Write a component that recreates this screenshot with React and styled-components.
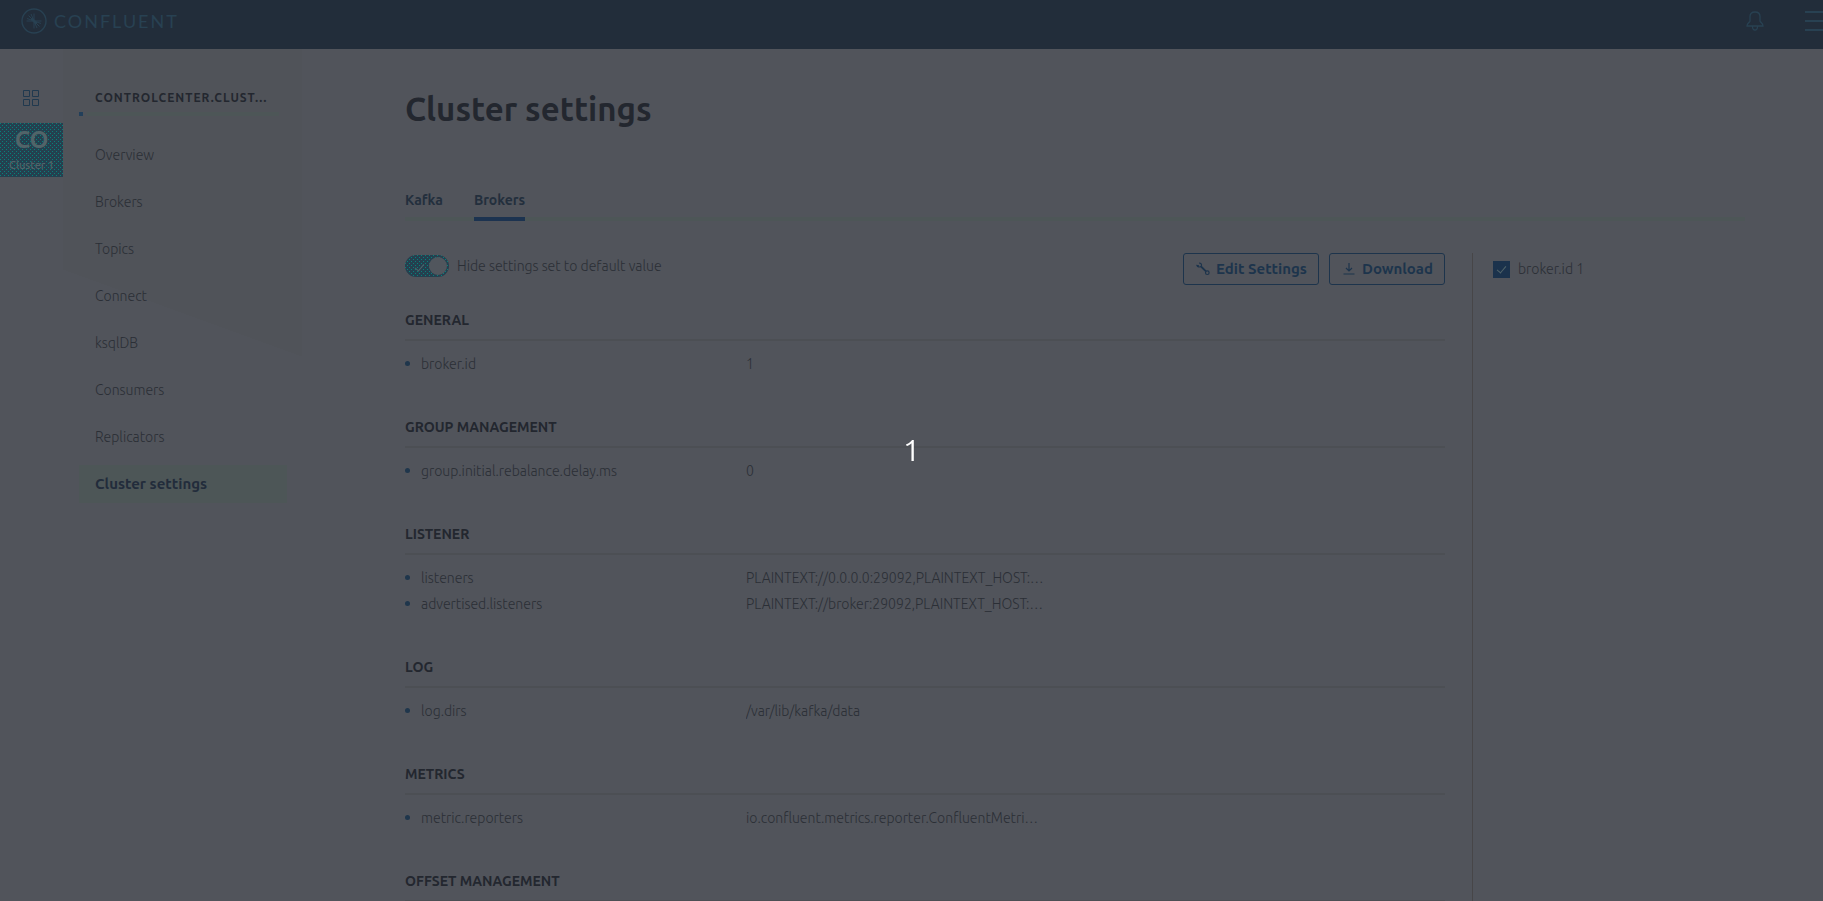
import React from "react";
import styled, { createGlobalStyle, css } from "styled-components";

const ink = "#23272f";
const soft = "#2b2f36";
const blue = "#1d344c";
const mint = "#4d5657";

const speckled = css`
  background:
    conic-gradient(from 270deg at 1px 1px, #08807a 90deg, transparent 0) 2px 2px / 4px 4px,
    conic-gradient(from 270deg at 1px 1px, #08807a 90deg, transparent 0) 4px 4px / 4px 4px,
    #24404f;
`;

const tick = css`
  content: "";
  width: 4px;
  height: 8px;
  border: solid #51646a;
  border-width: 0 1px 1px 0;
  transform: rotate(40deg);
`;

const GlobalStyle = createGlobalStyle`
  * { box-sizing: border-box; }
  body {
    margin: 0;
    background: #51545b;
    color: ${soft};
    font: 300 14px/26px Ubuntu, "Noto Sans", sans-serif;
  }
  h1, h2, ul, dl, dd, p { margin: 0; padding: 0; }
  ul { list-style: none; }
  a { color: inherit; text-decoration: none; }
  button { font: inherit; cursor: pointer; }
`;

const Page = styled.div`
  height: 100vh;
  overflow: hidden;
  display: flex;
  flex-direction: column;
`;

const TopBar = styled.header`
  flex: none;
  height: 49px;
  padding: 0 0 7px 21px;
  background: #222d3a;
  color: #284152;
  display: flex;
  align-items: center;
  justify-content: space-between;
`;

const Brand = styled.a`
  display: flex;
  align-items: center;
  gap: 7px;
  font: 400 18px/24px Lato, sans-serif;
  letter-spacing: 2px;
`;

const TopActions = styled.div`
  display: flex;
  align-items: center;
  gap: 41px;
`;

const IconButton = styled.button`
  display: flex;
  padding: 0;
  border: 0;
  background: none;
  color: inherit;
`;

const Body = styled.div`
  flex: 1;
  min-height: 0;
  display: flex;
`;

const Rail = styled.nav`
  flex: none;
  width: 63px;
  padding-top: 40px;
  display: flex;
  flex-direction: column;
  align-items: center;
  gap: 16px;
`;

const RailLink = styled.a`
  display: flex;
  color: #20394f;
`;

const ClusterTile = styled.a`
  width: 100%;
  height: 54px;
  padding-top: 4px;
  ${speckled}
  color: #516469;
  text-align: center;
`;

const TileCode = styled.strong`
  display: block;
  font-size: 24px;
  line-height: 26px;
  font-weight: 700;
`;

const TileName = styled.span`
  display: block;
  font-size: 11px;
  line-height: 24px;
  font-weight: 500;
`;

const Side = styled.nav`
  flex: none;
  width: 239px;
  padding: 36px 15px 0 16px;
  background: linear-gradient(200deg, #505359 0 289px, transparent 289px) no-repeat;
`;

const SideTitle = styled.h2`
  padding: 0 16px;
  color: ${ink};
  font-size: 12px;
  line-height: 26px;
  font-weight: 700;
  letter-spacing: 1px;
  white-space: nowrap;
`;

const Progress = styled.div`
  display: flex;
  gap: 4px;
  width: 200px;
  margin: 1px 0 20px;
  &::before { content: ""; width: 4px; height: 4px; background: #223f5a; }
  &::after { content: ""; flex: 1; height: 4px; background: ${mint}; }
`;

const SideList = styled.ul`
  display: flex;
  flex-direction: column;
  gap: 9px;
`;

const SideLink = styled.a`
  display: block;
  padding: 0 16px;
  line-height: 38px;
  font-size: ${(p) => (p.$active ? 15 : 14)}px;
  font-weight: ${(p) => (p.$active ? 700 : 300)};
  color: ${(p) => (p.$active ? "#222c3b" : soft)};
  background: ${(p) => (p.$active ? mint : "none")};
`;

const Main = styled.main`
  flex: 1;
  min-width: 0;
  padding: 39px 78px 0 103px;
  display: flex;
  flex-direction: column;
`;

const Title = styled.h1`
  color: ${ink};
  font-size: 33px;
  line-height: 42px;
  font-weight: 700;
`;

const Tabs = styled.div`
  margin-top: 57px;
  display: flex;
  gap: 31px;
  box-shadow: inset 0 -4px ${mint};
`;

const Tab = styled.button`
  padding: 0 0 4px;
  border: 0;
  border-bottom: 4px solid ${(p) => (p.$active ? "#1c3350" : "transparent")};
  background: none;
  color: #232f3d;
  font-weight: 600;
  line-height: 26px;
`;

const Columns = styled.div`
  flex: 1;
  min-height: 0;
  margin-top: 32px;
  display: grid;
  grid-template-columns: minmax(0, 1fr) 273px;
  gap: 27px;
`;

const BrokerPane = styled.aside`
  padding: 3px 20px;
  border-left: 1px solid #474648;
`;

const Toolbar = styled.div`
  display: flex;
  justify-content: space-between;
  align-items: flex-start;
  height: 54px;
`;

const Actions = styled.div`
  display: flex;
  gap: 10px;
`;

const Button = styled.button`
  display: flex;
  align-items: center;
  gap: 6px;
  height: 32px;
  padding: 0 11px 0 12px;
  border: 1px solid ${blue};
  border-radius: 3px;
  background: none;
  color: ${blue};
  font-size: 15px;
  font-weight: 700;
`;

const Choice = styled.label`
  display: flex;
  align-items: center;
  gap: 8px;
`;

const Switch = styled.input`
  appearance: none;
  margin: 0;
  width: 44px;
  height: 22px;
  padding: 0 2px 0 12px;
  border-radius: 11px;
  ${speckled}
  display: flex;
  align-items: center;
  justify-content: space-between;
  &::before { ${tick} }
  &::after {
    content: "";
    width: 18px;
    height: 18px;
    border-radius: 50%;
    background: #51565d;
  }
`;

const Check = styled.input`
  appearance: none;
  margin: 0;
  width: 17px;
  height: 17px;
  padding-bottom: 2px;
  background: #1b324c;
  display: flex;
  align-items: center;
  justify-content: center;
  &::before { ${tick} }
`;

const Section = styled.section`
  height: ${(p) => 81 + p.$rows * 26}px;
`;

const SectionTitle = styled.h2`
  height: 34px;
  border-bottom: 2px solid #4c4f54;
  color: ${ink};
  font-size: 14px;
  line-height: 26px;
  font-weight: 700;
`;

const Settings = styled.dl`
  padding-top: 10px;
`;

const Setting = styled.div`
  display: grid;
  grid-template-columns: 341px 1fr;
`;

const Key = styled.dt`
  display: flex;
  align-items: center;
  gap: 11px;
  &::before {
    content: "";
    width: 5px;
    height: 5px;
    margin-bottom: 2px;
    border-radius: 50%;
    background: #1f364c;
  }
`;

const Value = styled.dd`
  overflow: hidden;
  text-overflow: ellipsis;
  white-space: nowrap;
`;

const CountOverlay = styled.div`
  position: fixed;
  inset: 0;
  padding-bottom: 2px;
  display: flex;
  align-items: center;
  justify-content: center;
  color: #fff;
  font-size: 30px;
  line-height: 40px;
  font-weight: 400;
  pointer-events: none;
`;

const Logo = () => (
  <svg width="26" height="26" viewBox="0 0 26 26" fill="none" stroke="currentColor" aria-hidden="true">
    <circle cx="13" cy="13" r="12" strokeWidth="1.4" />
    <path d="M13 5.500v15M5.500 13h15M13 13L7.500 7.500M13 13L10 6M13 13L6 10.500M13 13l5.500 5.500M13 13l3 7M13 13l7 2.500" strokeWidth="1" />
    <path d="M10.500 10.500l5 5" strokeWidth="2.500" />
  </svg>
);

const Bell = () => (
  <svg width="18" height="20" viewBox="0 0 18 20" fill="none" stroke="currentColor" strokeWidth="1.3" aria-hidden="true">
    <path d="M4 9V5.500C4 2.500 5.500 1 9 1s5 1.500 5 4.500V10c0 1.500 3 1.500 3 5H1c0-3.500 3-3.500 3-5V9zM6.500 15.500c0 2 1 3.500 2.500 3.500s2.500-1.500 2.500-3.500" />
  </svg>
);

const Menu = () => (
  <svg width="18" height="22" viewBox="0 0 18 22" fill="none" stroke="currentColor" strokeWidth="2" aria-hidden="true">
    <path d="M0 2h18M0 11h18M0 20h18" />
  </svg>
);

const Grid = () => (
  <svg width="18" height="18" viewBox="0 0 18 18" fill="none" stroke="currentColor" aria-hidden="true">
    <path d="M.5 1.500h6v6h-6zM9.500 1.500h6v6h-6zM.5 10.500h6v6h-6zM9.500 10.500h6v6h-6z" />
  </svg>
);

const Wrench = () => (
  <svg width="14" height="14" viewBox="0 0 14 14" fill="none" stroke="currentColor" aria-hidden="true">
    <path d="M5 4.500l5 4.800" strokeWidth="1.800" />
    <path d="M3 1c2 0 3 1.300 2.300 3.300C3.500 5.500 1.500 5 1 3.500l2 .3" strokeWidth="1.200" />
    <circle cx="11.300" cy="10.700" r="1.800" strokeWidth="1.200" />
  </svg>
);

const DownloadIcon = () => (
  <svg width="14" height="14" viewBox="0 0 14 14" fill="none" stroke="currentColor" strokeWidth="1.200" aria-hidden="true">
    <path d="M7 1v8M4 6l3 3 3-3M1.500 12h11" />
  </svg>
);

const links = ["Overview", "Brokers", "Topics", "Connect", "ksqlDB", "Consumers", "Replicators", "Cluster settings"];

const sections = [
  ["GENERAL", [["broker.id", "1"]]],
  ["GROUP MANAGEMENT", [["group.initial.rebalance.delay.ms", "0"]]],
  ["LISTENER", [
    ["listeners", "PLAINTEXT://0.0.0.0:29092,PLAINTEXT_HOST:…"],
    ["advertised.listeners", "PLAINTEXT://broker:29092,PLAINTEXT_HOST:…"],
  ]],
  ["LOG", [["log.dirs", "/var/lib/kafka/data"]]],
  ["METRICS", [["metric.reporters", "io.confluent.metrics.reporter.ConfluentMetri…"]]],
  ["OFFSET MANAGEMENT", []],
];

export default function App() {
  return (
    <Page>
      <GlobalStyle />
      <TopBar>
        <Brand href="#"><Logo />CONFLUENT</Brand>
        <TopActions>
          <IconButton aria-label="Notifications"><Bell /></IconButton>
          <IconButton aria-label="Menu"><Menu /></IconButton>
        </TopActions>
      </TopBar>
      <Body>
        <Rail>
          <RailLink href="#" aria-label="Clusters"><Grid /></RailLink>
          <ClusterTile href="#">
            <TileCode>CO</TileCode>
            <TileName>Cluster 1</TileName>
          </ClusterTile>
        </Rail>
        <Side>
          <SideTitle>CONTROLCENTER.CLUST…</SideTitle>
          <Progress />
          <SideList>
            {links.map((name) => (
              <li key={name}><SideLink href="#" $active={name === "Cluster settings"}>{name}</SideLink></li>
            ))}
          </SideList>
        </Side>
        <Main>
          <Title>Cluster settings</Title>
          <Tabs>
            <Tab>Kafka</Tab>
            <Tab $active>Brokers</Tab>
          </Tabs>
          <Columns>
            <div>
              <Toolbar>
                <Choice><Switch type="checkbox" role="switch" defaultChecked />Hide settings set to default value</Choice>
                <Actions>
                  <Button><Wrench />Edit Settings</Button>
                  <Button><DownloadIcon />Download</Button>
                </Actions>
              </Toolbar>
              {sections.map(([title, rows]) => (
                <Section key={title} $rows={rows.length}>
                  <SectionTitle>{title}</SectionTitle>
                  <Settings>
                    {rows.map(([key, value]) => (
                      <Setting key={key}><Key>{key}</Key><Value>{value}</Value></Setting>
                    ))}
                  </Settings>
                </Section>
              ))}
            </div>
            <BrokerPane>
              <Choice><Check type="checkbox" defaultChecked />broker.id 1</Choice>
            </BrokerPane>
          </Columns>
        </Main>
      </Body>
      <CountOverlay>1</CountOverlay>
    </Page>
  );
}
